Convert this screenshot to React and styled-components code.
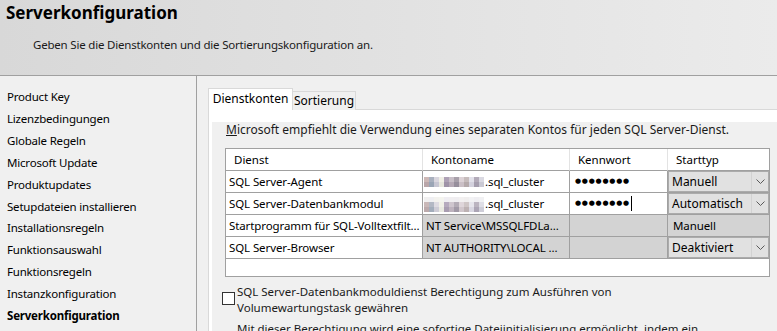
import React from 'react';
import styled, { createGlobalStyle } from 'styled-components';

const FONT = `"Noto Sans", "Liberation Sans", sans-serif`;

const GlobalStyle = createGlobalStyle`
  html, body { margin: 0; padding: 0; }
  body { background: #f0f0f0; font-family: ${FONT}; color: #000; }
`;

const Page = styled.div`
  width: 777px;
  height: 331px;
  overflow: hidden;
  display: flex;
  flex-direction: column;
  background: #f0f0f0;
`;

const Header = styled.header`
  flex: none;
  height: 76px;
  box-sizing: border-box;
  border-bottom: 1px solid #a0a0a0;
  background: linear-gradient(to right, #d8d8d8, #ebebeb);
  padding: 3px 0 0 6px;
`;

const Title = styled.h1`
  margin: 0;
  font-size: 17px;
  line-height: 20px;
  font-weight: 700;
`;

const Subtitle = styled.p`
  margin: 14px 0 0 27px;
  font-size: 11.5px;
  letter-spacing: -0.2px;
  line-height: 16px;
  color: #1a1a1a;
`;

const Body = styled.div`
  flex: 1;
  display: flex;
  min-height: 0;
`;

const Nav = styled.nav`
  flex: none;
  width: 197px;
  box-sizing: border-box;
  border-right: 1px solid #a0a0a0;
  padding: 10px 0 0 7px;
`;

const NavItem = styled.div`
  font-size: 11.5px;
  letter-spacing: -0.2px;
  line-height: 21.9px;
  white-space: nowrap;
  font-weight: ${(p) => (p.$active ? 700 : 400)};
`;

const Main = styled.main`
  flex: 1;
  min-width: 0;
  padding: 12px 0 0 11px;
`;

const TabBar = styled.div`
  display: flex;
  align-items: flex-end;
  height: 22px;
  position: relative;
  z-index: 1;
`;

const Tab = styled.div`
  box-sizing: border-box;
  width: ${(p) => p.$w}px;
  height: ${(p) => (p.$active ? 22 : 19)}px;
  background: ${(p) => (p.$active ? '#ffffff' : '#f0f0f0')};
  border: 1px solid #d9d9d9;
  border-bottom: none;
  ${(p) => (p.$active ? '' : 'border-left: none;')}
  font-size: 12px;
  line-height: ${(p) => (p.$active ? 20 : 18)}px;
  text-align: center;
  white-space: nowrap;
`;

const Panel = styled.div`
  margin-top: -1px;
  border: 1px solid #d9d9d9;
  border-right: none;
  background: #ffffff;
  padding: 2px 0 0 3px;
  height: 240px;
  box-sizing: border-box;
`;

const TabPage = styled.div`
  background: #f0f0f0;
  height: 100%;
  padding: 0 0 0 13px;
  box-sizing: border-box;
`;

const Intro = styled.p`
  margin: 10px 0 10px 1px;
  font-size: 12px;
  line-height: 16px;
  white-space: nowrap;
  color: #1a1a1a;
`;

const Accel = styled.span`
  text-decoration: underline;
`;

const Grid = styled.div`
  width: 545px;
  box-sizing: border-box;
  border: 1px solid #a0a0a0;
  background: #ffffff;
  display: grid;
  grid-template-columns: 197px 147px 98px 101px;
  grid-template-rows: repeat(5, 22px) 17px;
`;

const HeadCell = styled.div`
  box-sizing: border-box;
  border-right: ${(p) => (p.$last ? 'none' : '1px solid #e3e3e3')};
  border-bottom: 1px solid #a0a0a0;
  padding-left: 8px;
  font-size: 11.5px;
  line-height: 21px;
  white-space: nowrap;
  overflow: hidden;
`;

const Cell = styled.div`
  box-sizing: border-box;
  border-right: ${(p) => (p.$last ? 'none' : '1px solid #a0a0a0')};
  border-bottom: 1px solid #a0a0a0;
  background: ${(p) => (p.$disabled ? '#d3d3d3' : '#ffffff')};
  padding-left: ${(p) => p.$pad ?? 3}px;
  font-size: 11.5px;
  letter-spacing: -0.1px;
  line-height: 21px;
  white-space: nowrap;
  overflow: hidden;
  display: flex;
  align-items: center;
`;

const ComboCell = styled.div`
  box-sizing: border-box;
  border-bottom: 1px solid #a0a0a0;
  background: #ffffff;
  display: flex;
`;

const Combo = styled.div`
  flex: 1;
  display: flex;
  align-items: center;
  box-sizing: border-box;
  border: 1px solid #ababab;
  background: #e1e1e1;
  font-size: 12px;
  line-height: 19px;
  white-space: nowrap;
`;

const ComboText = styled.span`
  flex: 1;
  padding-left: 3px;
`;

const ComboButton = styled.span`
  flex: none;
  width: 16px;
  height: 100%;
  display: flex;
  align-items: center;
  justify-content: center;
  border-left: 1px solid #d2d2d2;
`;

const Dots = styled.span`
  font-family: "DejaVu Sans", sans-serif;
  font-size: 7px;
  letter-spacing: 0.75px;
  padding-left: 1px;
`;

const Caret = styled.span`
  display: inline-block;
  width: 1px;
  height: 15px;
  background: #000;
  margin-left: 1px;
`;

const Filler = styled.div`
  grid-column: 1 / -1;
  background: #ffffff;
`;

const CheckRow = styled.div`
  display: flex;
  align-items: flex-start;
  margin: 7px 0 0 -3px;
`;

const CheckBox = styled.span`
  flex: none;
  width: 11px;
  height: 11px;
  border: 1px solid #333333;
  background: #ffffff;
  margin-top: 8px;
  margin-right: 2px;
`;

const CheckLabel = styled.div`
  font-size: 11.5px;
  line-height: 16px;
  color: #1a1a1a;
`;

const Note = styled.p`
  margin: 5px 0 0 12px;
  font-size: 11.5px;
  line-height: 16px;
  white-space: nowrap;
  color: #1a1a1a;
`;

const Chevron = () => (
  <svg width="9" height="5" viewBox="0 0 9 5">
    <path d="M0.5 0.5 L4.5 4.5 L8.5 0.5" fill="none" stroke="#5a5a5a" strokeWidth="1" />
  </svg>
);

const MOSAIC = [
  ['#cdb8b6', '#a9b0be', '#d9d6de', '#f0efe6', '#aea1b6', '#c8bfc7', '#a8a0aa', '#dcd2d6', '#c6bcbc', '#e2e1ea', '#b3abb9', '#dad9e2'],
  ['#b9a6a9', '#9aa5b5', '#c7c6d2', '#e6e6dd', '#9f93a8', '#b6aab6', '#978f9c', '#cbc0c6', '#b5aaab', '#d4d2de', '#a59eae', '#c9c8d3'],
];
const MOSAIC2 = [
  ['#f1f0f0', '#efeff2', '#f3f2ee', '#f4f4ef', '#efedf2', '#f0eef0', '#efedf0', '#f2f0f0', '#f0eeee', '#f2f2f4', '#efeef2', '#f1f1f3'],
  ['#c9b8b8', '#b3b8c4', '#dedbe2', '#f1f0e8', '#b6aabe', '#cfc6ce', '#b4acb6', '#dfd6da', '#cfc6c6', '#e6e5ec', '#bbb4c0', '#dfdee6'],
  ['#bcaaac', '#a3adbb', '#ceccd6', '#e9e9e1', '#a99db1', '#beb3be', '#a199a6', '#d1c7cc', '#bdb2b3', '#d9d7e2', '#aca5b5', '#cecdd8'],
];

const Mosaic = ({ rows, y = 0 }) => (
  <svg width="62" height={rows.length * 5} viewBox={`0 0 62 ${rows.length * 5}`} style={{ flex: 'none', marginTop: y }}>
    {rows.map((r, ri) =>
      r.map((c, ci) => <rect key={`${ri}-${ci}`} x={1 + ci * 5} y={ri * 5} width="5" height="5" fill={c} />)
    )}
  </svg>
);

const navItems = [
  'Product Key',
  'Lizenzbedingungen',
  'Globale Regeln',
  'Microsoft Update',
  'Produktupdates',
  'Setupdateien installieren',
  'Installationsregeln',
  'Funktionsauswahl',
  'Funktionsregeln',
  'Instanzkonfiguration',
  'Serverkonfiguration',
];

const ComboBox = ({ value, arrow = true }) => (
  <ComboCell>
    <Combo>
      <ComboText>{value}</ComboText>
      {arrow && (
        <ComboButton>
          <Chevron />
        </ComboButton>
      )}
    </Combo>
  </ComboCell>
);

export default function App() {
  return (
    <>
      <GlobalStyle />
      <Page>
        <Header>
          <Title>Serverkonfiguration</Title>
          <Subtitle>Geben Sie die Dienstkonten und die Sortierungskonfiguration an.</Subtitle>
        </Header>
        <Body>
          <Nav>
            {navItems.map((n, i) => (
              <NavItem key={n} $active={i === navItems.length - 1}>
                {n}
              </NavItem>
            ))}
          </Nav>
          <Main>
            <TabBar>
              <Tab $active $w={85}>Dienstkonten</Tab>
              <Tab $w={63}>Sortierung</Tab>
            </TabBar>
            <Panel>
              <TabPage>
                <Intro>
                  <Accel>M</Accel>icrosoft empfiehlt die Verwendung eines separaten Kontos für jeden SQL Server-Dienst.
                </Intro>
                <Grid>
                  <HeadCell>Dienst</HeadCell>
                  <HeadCell>Kontoname</HeadCell>
                  <HeadCell>Kennwort</HeadCell>
                  <HeadCell $last>Starttyp</HeadCell>

                  <Cell>SQL Server-Agent</Cell>
                  <Cell $pad={0}>
                    <Mosaic rows={MOSAIC} />
                    .sql_cluster
                  </Cell>
                  <Cell $pad={4}>
                    <Dots>●●●●●●●●</Dots>
                  </Cell>
                  <ComboBox value="Manuell" />

                  <Cell>SQL Server-Datenbankmodul</Cell>
                  <Cell $pad={0}>
                    <Mosaic rows={MOSAIC2} y={2} />
                    .sql_cluster
                  </Cell>
                  <Cell $pad={4}>
                    <Dots>●●●●●●●●</Dots>
                    <Caret />
                  </Cell>
                  <ComboBox value="Automatisch" />

                  <Cell>Startprogramm für SQL-Volltextfilt...</Cell>
                  <Cell $disabled $pad={3}>NT Service\MSSQLFDLa...</Cell>
                  <Cell $disabled />
                  <Cell $disabled $last $pad={5}>Manuell</Cell>

                  <Cell>SQL Server-Browser</Cell>
                  <Cell $disabled $pad={3}>NT AUTHORITY\LOCAL ...</Cell>
                  <Cell $disabled />
                  <ComboBox value="Deaktiviert" />

                  <Filler />
                </Grid>
                <CheckRow>
                  <CheckBox />
                  <CheckLabel>
                    SQL Server-Datenbankmoduldienst Berechtigung zum Ausführen von
                    <br />
                    Volumewartungstask gewähren
                  </CheckLabel>
                </CheckRow>
                <Note>Mit dieser Berechtigung wird eine sofortige Dateiinitialisierung ermöglicht, indem ein</Note>
              </TabPage>
            </Panel>
          </Main>
        </Body>
      </Page>
    </>
  );
}
